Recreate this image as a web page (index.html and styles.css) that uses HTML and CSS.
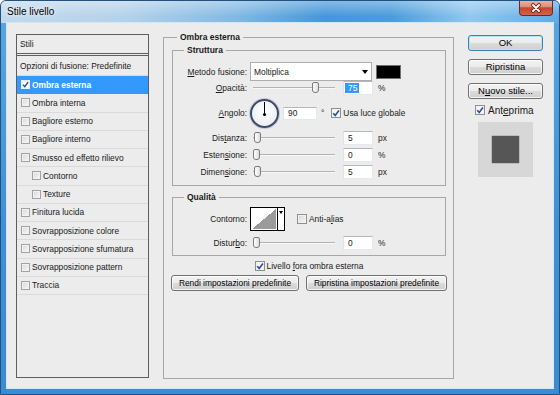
FILE: index.html
```html
<!DOCTYPE html>
<html lang="it">
<head>
    <meta charset="UTF-8">
    <meta name="viewport" content="width=device-width, initial-scale=1.0">
    <title>Stile livello</title>
    <link rel="stylesheet" href="styles.css">
</head>
<body>
    <div class="window">
        <div class="titlebar">
            <span class="title">Stile livello</span>
            <div class="close-button">
                <svg width="12" height="10" viewBox="0 0 12 10">
                    <path d="M3 2 L9 8 M9 2 L3 8" stroke="#5b1c12" stroke-width="3.6" stroke-linecap="round"/>
                    <path d="M3 2 L9 8 M9 2 L3 8" stroke="#ffffff" stroke-width="2" stroke-linecap="round"/>
                </svg>
            </div>
        </div>

        <div class="client">
            <!-- styles list -->
            <div class="styles-panel">
                <div class="styles-head">Stili</div>
                <div class="style-row blend">Opzioni di fusione: Predefinite</div>
                <div class="style-row selected">
                    <span class="cb small checked"><svg width="7" height="7" viewBox="0 0 8 8"><path d="M1.2 4.2 L3.2 6.4 L6.9 1.4" fill="none" stroke="#2a4fa8" stroke-width="1.6"/></svg></span>Ombra esterna
                </div>
                <div class="style-row"><span class="cb small"></span>Ombra interna</div>
                <div class="style-row"><span class="cb small"></span>Bagliore esterno</div>
                <div class="style-row"><span class="cb small"></span>Bagliore interno</div>
                <div class="style-row"><span class="cb small"></span>Smusso ed effetto rilievo</div>
                <div class="style-row sub"><span class="cb small"></span>Contorno</div>
                <div class="style-row sub"><span class="cb small"></span>Texture</div>
                <div class="style-row"><span class="cb small"></span>Finitura lucida</div>
                <div class="style-row"><span class="cb small"></span>Sovrapposizione colore</div>
                <div class="style-row"><span class="cb small"></span>Sovrapposizione sfumatura</div>
                <div class="style-row"><span class="cb small"></span>Sovrapposizione pattern</div>
                <div class="style-row"><span class="cb small"></span>Traccia</div>
            </div>

            <!-- options -->
            <fieldset class="group main-group">
                <legend>Ombra esterna</legend>

                <fieldset class="group sub-group structure">
                    <legend>Struttura</legend>

                    <div class="field-row row-select">
                        <span class="field-label"><u>M</u>etodo fusione:</span>
                        <div class="select">Moltiplica<span class="select-arrow"></span></div>
                        <span class="swatch"></span>
                    </div>

                    <div class="field-row row-slider">
                        <span class="field-label"><u>O</u>pacità:</span>
                        <div class="slider"><span class="slider-thumb" style="left:59px"></span></div>
                        <span class="num-input"><span class="num-value selected">75</span></span>
                        <span class="unit">%</span>
                    </div>

                    <div class="field-row row-angle">
                        <span class="field-label"><u>A</u>ngolo:</span>
                        <div class="angle-dial"><span class="angle-needle"></span><span class="angle-center"></span></div>
                        <span class="num-input wide"><span class="num-value">90</span></span>
                        <span class="unit deg">°</span>
                        <label class="check-label global-light">
                            <span class="cb checked"><svg width="8" height="8" viewBox="0 0 8 8"><path d="M1.2 4.2 L3.2 6.4 L6.9 1.4" fill="none" stroke="#2a4fa8" stroke-width="1.6"/></svg></span>
                            <span>Usa luce <u>g</u>lobale</span>
                        </label>
                    </div>

                    <div class="field-row row-slider">
                        <span class="field-label">Dis<u>t</u>anza:</span>
                        <div class="slider"><span class="slider-thumb" style="left:1px"></span></div>
                        <span class="num-input"><span class="num-value">5</span></span>
                        <span class="unit">px</span>
                    </div>

                    <div class="field-row row-slider">
                        <span class="field-label">Esten<u>s</u>ione:</span>
                        <div class="slider"><span class="slider-thumb" style="left:0px"></span></div>
                        <span class="num-input"><span class="num-value">0</span></span>
                        <span class="unit">%</span>
                    </div>

                    <div class="field-row row-slider">
                        <span class="field-label">Dimen<u>s</u>ione:</span>
                        <div class="slider"><span class="slider-thumb" style="left:1px"></span></div>
                        <span class="num-input"><span class="num-value">5</span></span>
                        <span class="unit">px</span>
                    </div>
                </fieldset>

                <fieldset class="group sub-group quality">
                    <legend>Qualità</legend>

                    <div class="field-row row-contour">
                        <span class="field-label">Contorno:</span>
                        <div class="contour">
                            <span class="contour-curve"></span>
                            <span class="contour-arrow"></span>
                        </div>
                        <label class="check-label anti-alias">
                            <span class="cb"></span>
                            <span>Anti-a<u>l</u>ias</span>
                        </label>
                    </div>

                    <div class="field-row row-slider">
                        <span class="field-label">Distur<u>b</u>o:</span>
                        <div class="slider"><span class="slider-thumb" style="left:0px"></span></div>
                        <span class="num-input"><span class="num-value">0</span></span>
                        <span class="unit">%</span>
                    </div>
                </fieldset>

                <div class="knock-row">
                    <label class="check-label">
                        <span class="cb checked"><svg width="8" height="8" viewBox="0 0 8 8"><path d="M1.2 4.2 L3.2 6.4 L6.9 1.4" fill="none" stroke="#2a4fa8" stroke-width="1.6"/></svg></span>
                        <span>Livello <u>f</u>ora ombra esterna</span>
                    </label>
                </div>

                <div class="default-buttons">
                    <button class="btn btn-make">Rendi impostazioni predefinite</button>
                    <button class="btn btn-reset">Ripristina impostazioni predefinite</button>
                </div>
            </fieldset>

            <!-- dialog buttons -->
            <div class="side">
                <button class="btn side-btn btn-default">OK</button>
                <button class="btn side-btn">Ripristina</button>
                <button class="btn side-btn">N<u>u</u>ovo stile...</button>
                <label class="check-label preview-toggle">
                    <span class="cb checked"><svg width="8" height="8" viewBox="0 0 8 8"><path d="M1.2 4.2 L3.2 6.4 L6.9 1.4" fill="none" stroke="#2a4fa8" stroke-width="1.6"/></svg></span>
                    <span>Ant<u>e</u>prima</span>
                </label>
                <div class="preview"><div class="preview-swatch"></div></div>
            </div>
        </div>
    </div>
</body>
</html>
```

FILE: styles.css
```css
body {
    margin: 0;
    font-family: "Liberation Sans", Arial, sans-serif;
    font-size: 8.4px;
    color: #1a1a1a;
    background: #ffffff;
}

u {
    text-decoration-thickness: 1px;
    text-underline-offset: 1px;
}

.window {
    width: 560px;
    height: 395px;
    box-sizing: border-box;
    border: 1px solid #23507e;
    border-radius: 6px 6px 0 0;
    background: linear-gradient(to bottom, #5aa7e1, #3f91d5 55%, #3a8bd2);
    display: flex;
    flex-direction: column;
    overflow: hidden;
}

.titlebar {
    height: 22px;
    flex: none;
    display: flex;
    align-items: flex-start;
    justify-content: space-between;
    background:
        linear-gradient(to bottom, rgba(255, 255, 255, 0.35), rgba(255, 255, 255, 0) 70%),
        linear-gradient(to right, #c2d9ec 0%, #b5d2ea 22%, #83b9e3 42%, #4697d9 58%, #4b9cdc 70%, #92c8ee 84%, #5fabe5 100%);
}

.title {
    margin: 5px 0 0 6px;
    font-size: 10px;
    line-height: 12px;
    color: #000;
    text-shadow: 0 0 5px #fff, 0 0 8px rgba(255, 255, 255, 0.8);
}

.close-button {
    width: 34px;
    height: 16px;
    margin: -1px 6px 0 0;
    box-sizing: border-box;
    border: 1px solid #6b2a1f;
    border-top: none;
    border-radius: 0 0 4px 4px;
    background: linear-gradient(to bottom, #e9b7a9 0%, #db8f7b 45%, #c5452e 52%, #d2644d 100%);
    display: flex;
    align-items: center;
    justify-content: center;
}

.client {
    flex: 1;
    margin: 0 6px 6px;
    background-color: #ececec;
    box-shadow: 0 0 0 1px #d3e6f4;
    display: flex;
    align-items: flex-start;
    padding-left: 9px;
}

/* styles list */

.styles-panel {
    width: 133px;
    height: 344px;
    margin-top: 11px;
    box-sizing: border-box;
    border: 1px solid #5e5e5e;
    background-color: #ececec;
    flex: none;
}

.styles-head {
    height: 18px;
    padding-left: 3px;
    display: flex;
    align-items: center;
    border-bottom: 3px double #5e5e5e;
}

.style-row {
    height: 18.25px;
    box-sizing: border-box;
    padding-left: 4px;
    display: flex;
    align-items: center;
    gap: 2px;
    border-bottom: 1px solid #dadada;
}

.style-row.blend {
    height: 20px;
    padding-left: 3px;
}

.style-row.sub {
    padding-left: 15px;
}

.style-row.selected {
    background-color: #3399ff;
    border-bottom-color: #3399ff;
    color: #fff;
    font-weight: bold;
}

/* checkboxes */

.cb {
    width: 10px;
    height: 10px;
    box-sizing: border-box;
    border: 1px solid #8f8f8f;
    background: linear-gradient(135deg, #d6d6d6, #f9f9f9);
    box-shadow: inset 0 0 0 1px #f2f2f2;
    display: flex;
    align-items: center;
    justify-content: center;
    flex: none;
}

.cb.small {
    width: 9px;
    height: 9px;
    border-color: #a2a2a2;
}

.cb.checked {
    background: #f6f6f6;
}

.selected .cb {
    border-color: #e8f2fc;
    background: #ffffff;
}

.check-label {
    display: flex;
    align-items: center;
    gap: 2px;
}

/* group boxes */

.group {
    margin: 0;
    min-width: 0;
    box-sizing: border-box;
    border: 1px solid #a7a7a7;
}

.group legend {
    padding: 0 3px;
    font-weight: bold;
    font-size: 8.5px;
    line-height: 10px;
}

.main-group {
    width: 291px;
    height: 347px;
    margin: 9px 0 0 14px;
    padding: 3px 7px 0 8px;
    flex: none;
}

.main-group > legend {
    margin-left: 5px;
}

.sub-group {
    padding: 7px 0 6px 0;
}

.sub-group > legend {
    margin-left: 11px;
}

.sub-group.quality {
    margin-top: 6px;
    padding: 5px 0 5px 0;
}

.field-row {
    display: flex;
    align-items: center;
}

.field-label {
    width: 74px;
    margin-right: 3px;
    text-align: right;
    flex: none;
}

.row-select {
    height: 19px;
}

.row-slider {
    height: 14px;
    margin-top: 3px;
}

.row-select + .row-slider {
    margin-top: 0;
}

.row-angle {
    height: 30px;
    margin: 3px 0 1px;
}

.row-contour {
    height: 24px;
}

.row-contour + .row-slider {
    margin-top: 5px;
}

/* controls */

.select {
    width: 122px;
    height: 19px;
    box-sizing: border-box;
    border: 1px solid #abadb3;
    background: #fff;
    padding: 0 3px 0 3px;
    display: flex;
    align-items: center;
    justify-content: space-between;
}

.select-arrow {
    width: 0;
    height: 0;
    border-left: 3px solid transparent;
    border-right: 3px solid transparent;
    border-top: 4px solid #000;
}

.swatch {
    width: 25px;
    height: 14px;
    margin-left: 4px;
    box-sizing: border-box;
    border: 1px solid #707070;
    background: #000;
}

.slider {
    position: relative;
    width: 82px;
    height: 14px;
    margin: 0 8px 0 3px;
    flex: none;
}

.slider::before {
    content: "";
    position: absolute;
    left: 0;
    right: 0;
    top: 6px;
    height: 1px;
    background: #b3b3b3;
    border-bottom: 1px solid #f8f8f8;
}

.slider-thumb {
    position: absolute;
    top: 1px;
    width: 7px;
    height: 11px;
    box-sizing: border-box;
    border: 1px solid #7b7b7b;
    border-radius: 2px 2px 3px 3px;
    background: linear-gradient(to right, #ffffff, #dedede);
}

.num-input {
    width: 30px;
    height: 14px;
    box-sizing: border-box;
    border: 1px solid;
    border-color: #b5b7bd #e3e9ef #e3e9ef #e2e3ea;
    background: #fff;
    padding-left: 1px;
    display: flex;
    align-items: center;
    flex: none;
}

.num-input.wide {
    width: 34px;
    height: 13px;
}

.num-value {
    padding: 0 2px 0 3px;
    line-height: 10px;
}

.num-value.selected {
    background: #3399ff;
    color: #fff;
}

.unit {
    margin-left: 5px;
}

.unit.deg {
    margin-left: 4px;
}

.angle-dial {
    position: relative;
    width: 29px;
    height: 29px;
    margin-right: 4px;
    box-sizing: border-box;
    border: 2px solid #3e4a68;
    border-radius: 50%;
    background: radial-gradient(circle at 50% 40%, #ffffff, #e5e8ef);
    box-shadow: 0 0 0 1px #c3cad9;
    flex: none;
}

.angle-needle {
    position: absolute;
    left: 12px;
    top: 1px;
    width: 1px;
    height: 12px;
    background: #000;
}

.angle-center {
    position: absolute;
    left: 11px;
    top: 12px;
    width: 3px;
    height: 3px;
    border-radius: 50%;
    background: #000;
}

.global-light {
    margin-left: 7px;
}

.contour {
    width: 35px;
    height: 24px;
    box-sizing: border-box;
    border: 1px solid #000;
    display: flex;
    flex: none;
}

.contour-curve {
    flex: 1;
    border: 1px solid #fff;
    background: linear-gradient(to top left, #9b9b9b 50%, #ffffff 50%);
}

.contour-arrow {
    width: 7px;
    border-left: 1px solid #000;
    background: #fff;
    display: flex;
    justify-content: center;
    padding-top: 3px;
    box-sizing: border-box;
}

.contour-arrow::after {
    content: "";
    width: 0;
    height: 0;
    border-left: 2px solid transparent;
    border-right: 2px solid transparent;
    border-top: 3px solid #000;
}

.anti-alias {
    margin-left: 12px;
}

.knock-row {
    height: 12px;
    margin-top: 4px;
    display: flex;
    justify-content: center;
}

.default-buttons {
    display: flex;
    justify-content: center;
    gap: 7px;
    margin-top: 3px;
}

/* buttons */

.btn {
    height: 16px;
    padding: 0;
    box-sizing: border-box;
    border: 1px solid #707070;
    border-radius: 3px;
    background: linear-gradient(to bottom, #f3f3f3 0%, #ebebeb 50%, #dcdcdc 50%, #cfcfcf 100%);
    box-shadow: inset 0 0 0 1px rgba(255, 255, 255, 0.75);
    font-family: inherit;
    font-size: 8.4px;
    color: #000;
    flex: none;
}

.btn-make {
    width: 128px;
}

.btn-reset {
    width: 141px;
}

.side {
    width: 75px;
    margin: 12px 0 0 14px;
    display: flex;
    flex-direction: column;
    font-size: 10px;
}

.side-btn {
    width: 75px;
    margin-bottom: 8px;
    font-size: 9.5px;
    line-height: 12px;
}

.btn-default {
    border-color: #3c7fb1;
    box-shadow: inset 0 0 0 1px #b8e4f8;
}

.preview-toggle {
    height: 12px;
    margin: -3px 0 0 7px;
    gap: 3px;
}

.preview {
    width: 55px;
    height: 55px;
    margin: 6px 0 0 10px;
    background: #d7d7d7;
    display: flex;
    align-items: center;
    justify-content: center;
}

.preview-swatch {
    width: 27px;
    height: 27px;
    background: #565656;
    box-shadow: 0 0 1px #3a3a3a;
}
```
